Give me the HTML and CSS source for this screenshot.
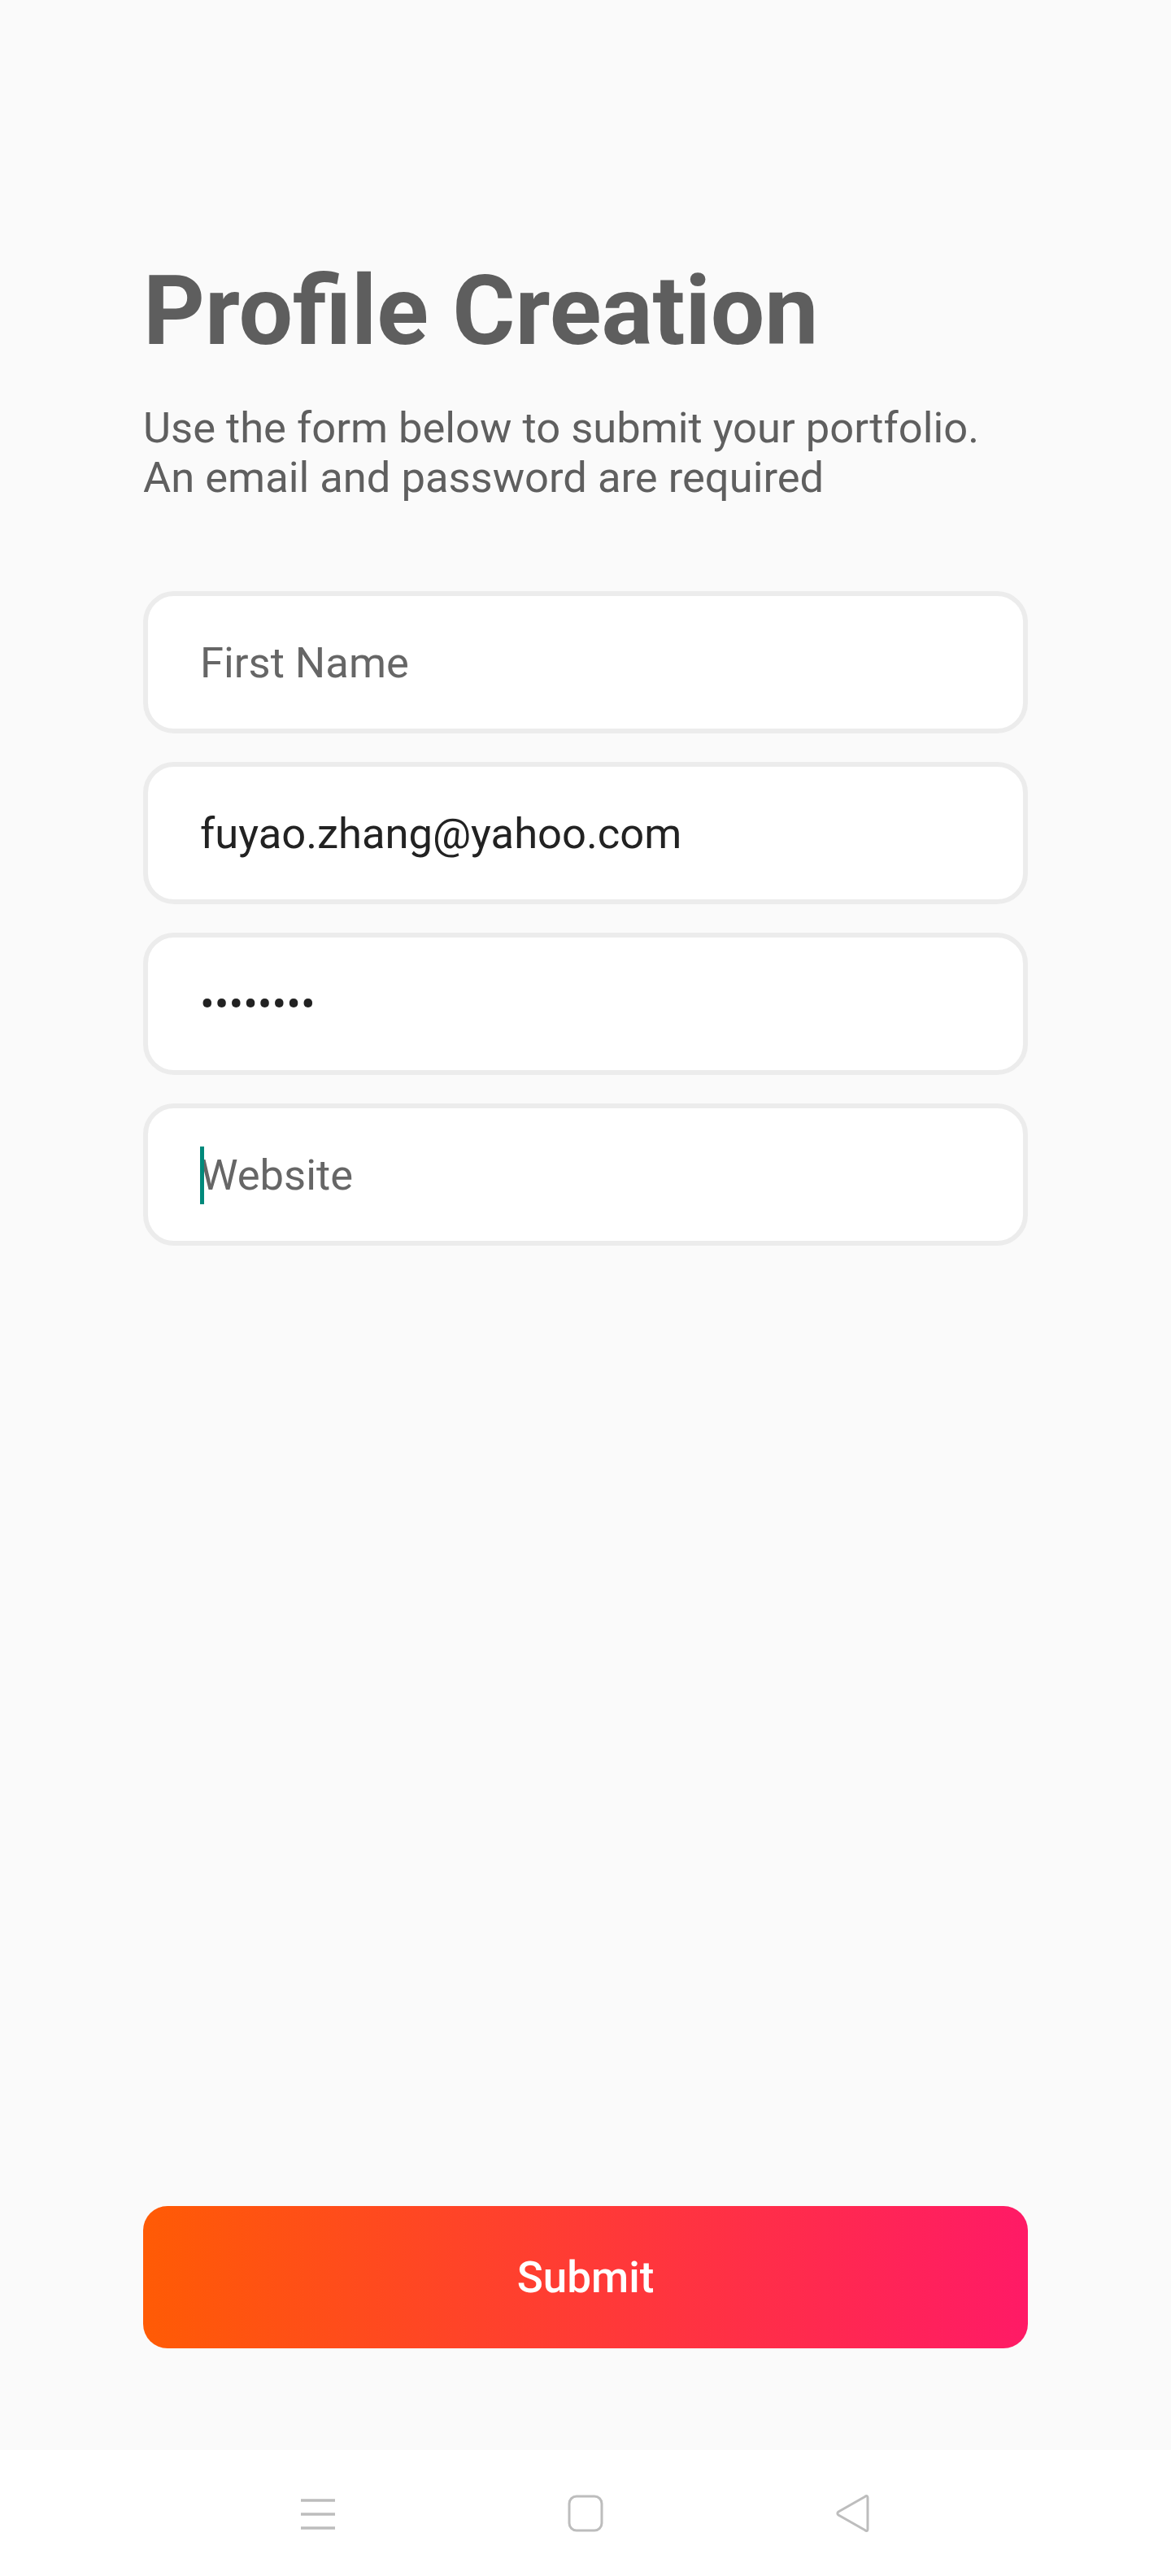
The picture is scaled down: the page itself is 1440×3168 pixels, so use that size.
FILE: index.html
```html
<!DOCTYPE html>
<html lang="en">
<head>
    <meta charset="UTF-8">
    <meta name="viewport" content="width=device-width, initial-scale=1.0">
    <title>Profile Creation</title>
    <link rel="stylesheet" href="styles.css">
</head>
<body>
    <div class="app">
        <main class="content">
            <h1 class="title">Profile Creation</h1>
            <p class="intro">Use the form below to submit your portfolio.<br>An email and password are required</p>

            <form id="profileForm" class="profile-form">
                <!-- First Name -->
                <div class="field">
                    <input type="text" name="firstName" placeholder="First Name">
                </div>

                <!-- Email -->
                <div class="field">
                    <input type="email" name="email" placeholder="Email" value="fuyao.zhang@yahoo.com">
                </div>

                <!-- Password -->
                <div class="field">
                    <input type="password" name="password" placeholder="Password" value="12345678">
                </div>

                <!-- Website -->
                <div class="field field-active">
                    <span class="caret"></span>
                    <input type="url" name="website" placeholder="Website">
                </div>
            </form>

            <button type="submit" form="profileForm" class="submit">Submit</button>
        </main>

        <nav class="nav-bar">
            <svg class="nav-icon" width="44" height="48" viewBox="0 0 44 48">
                <path d="M1 8H43M1 25H43M1 42H43" stroke="#bdbdbd" stroke-width="3.5" fill="none"/>
            </svg>
            <svg class="nav-icon" width="44" height="48" viewBox="0 0 44 48">
                <rect x="2" y="3" width="40" height="42" rx="9" stroke="#bdbdbd" stroke-width="3" fill="none"/>
            </svg>
            <svg class="nav-icon" width="44" height="48" viewBox="0 0 44 48">
                <path d="M40 4.5C40 2.5 38.5 1.8 37 3.2L4 22C2.5 23.2 2.5 24.8 4 26L37 44.8C38.5 46.2 40 45.5 40 43.5Z" stroke="#bdbdbd" stroke-width="3" fill="none" stroke-linejoin="round"/>
            </svg>
        </nav>
    </div>
</body>
</html>
```

FILE: styles.css
```css
* {
    box-sizing: border-box;
}

body {
    margin: 0;
    background-color: #fafafa;
    font-family: Roboto, 'Liberation Sans', sans-serif;
}

.app {
    display: flex;
    flex-direction: column;
    min-height: 100vh;
}

.content {
    flex: 1;
    display: flex;
    flex-direction: column;
    padding: 324px 176px 125px;
}

.title {
    margin: 0;
    color: #5e5e5e;
    font-size: 118px;
    font-weight: 700;
    line-height: 118px;
}

.intro {
    margin: 54px 0 0;
    color: #5f5f5f;
    font-size: 52.5px;
    line-height: 61px;
}

.profile-form {
    display: flex;
    flex-direction: column;
    gap: 35px;
    margin-top: 109px;
}

.field {
    position: relative;
    height: 175px;
    background: white;
    border: 6px solid #ececec;
    border-radius: 38px;
}

.field input {
    width: 100%;
    height: 100%;
    padding: 0 0 0 64px;
    border: none;
    background: transparent;
    color: #222;
    font-family: inherit;
    font-size: 52.5px;
    outline: none;
}

.field input::placeholder {
    color: #666;
}

.caret {
    position: absolute;
    left: 64px;
    top: 50%;
    width: 5px;
    height: 71px;
    margin-top: -35px;
    background: #00897b;
}

.submit {
    margin-top: auto;
    height: 175px;
    border: none;
    border-radius: 30px;
    background: linear-gradient(to right, #ff5b05, #ff1a66);
    color: white;
    font-family: inherit;
    font-size: 53px;
    font-weight: 500;
    cursor: pointer;
}

.nav-bar {
    display: flex;
    justify-content: center;
    align-items: center;
    gap: 285px;
    height: 155px;
    background: white;
}

.nav-icon {
    display: block;
}
```
